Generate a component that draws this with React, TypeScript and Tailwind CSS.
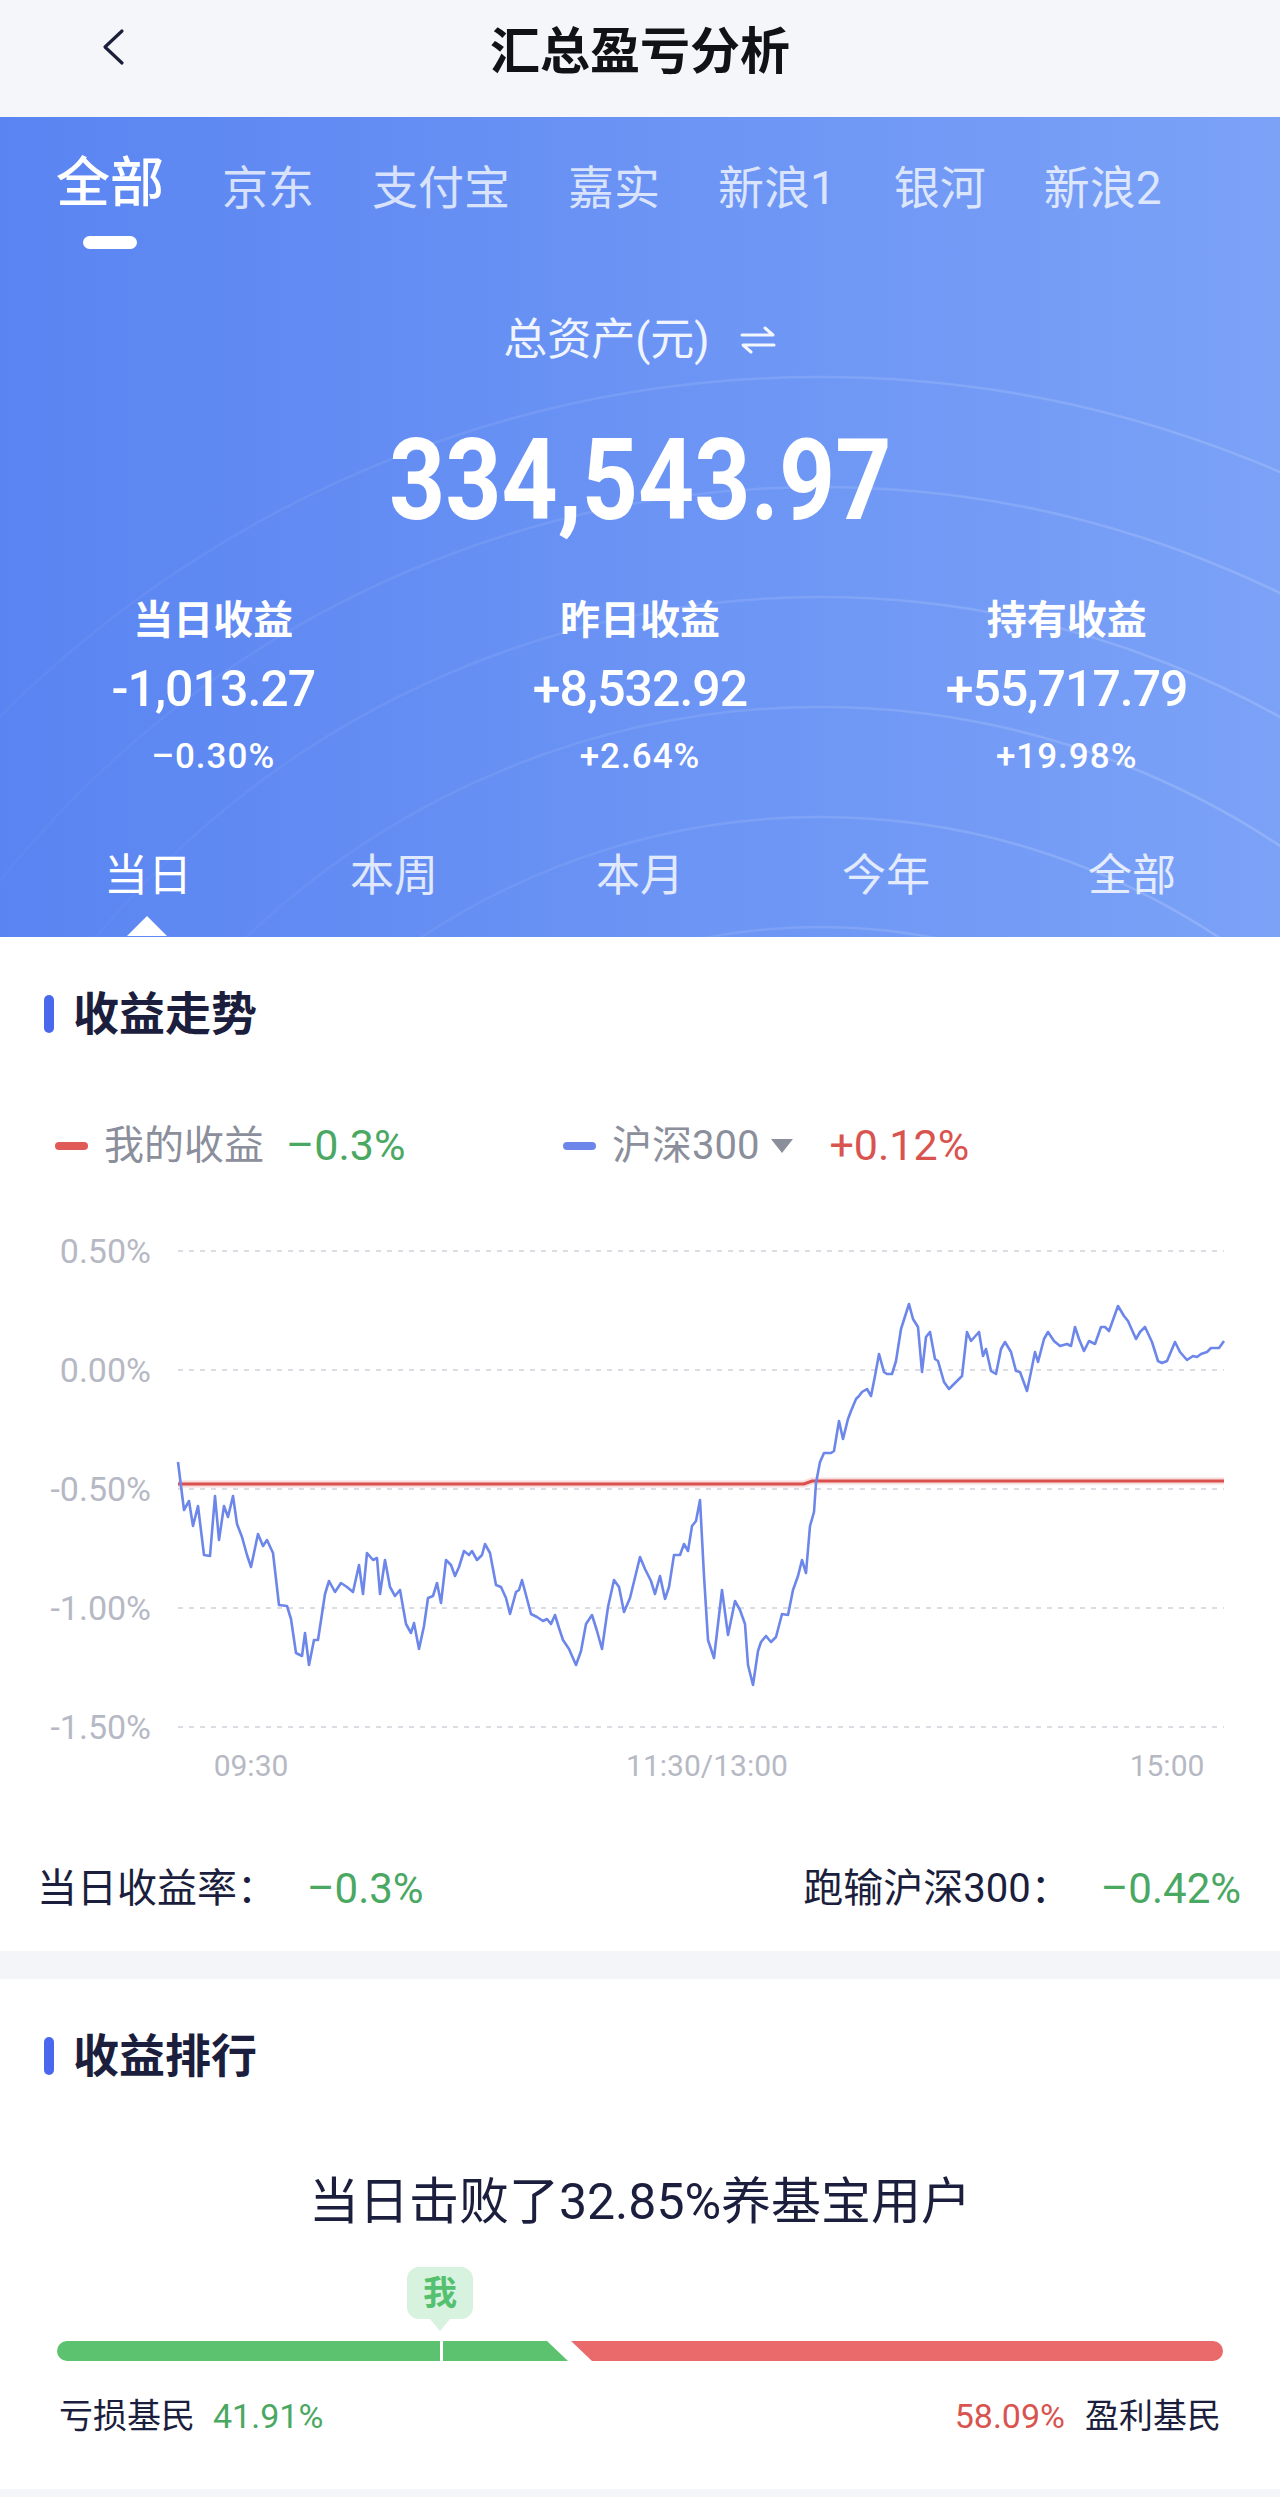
import React from 'react';

// 沪深300 当日走势（页面坐标）
const hs300: [number, number][] = [
  [178, 1463], [184, 1511], [189, 1502], [193, 1527], [198, 1507], [204, 1556], [210, 1557], [215, 1497],
  [219, 1541], [224, 1507], [228, 1518], [233, 1497], [237, 1525], [242, 1538], [247, 1556], [251, 1568],
  [258, 1535], [263, 1547], [267, 1541], [273, 1554], [279, 1606], [287, 1607], [291, 1620], [296, 1654],
  [302, 1657], [305, 1634], [309, 1666], [314, 1641], [318, 1641], [325, 1595], [329, 1582], [335, 1593],
  [341, 1584], [347, 1588], [353, 1593], [359, 1566], [363, 1595], [367, 1554], [373, 1561], [377, 1559],
  [380, 1595], [385, 1561], [390, 1588], [395, 1597], [400, 1591], [406, 1625], [411, 1634], [414, 1624],
  [419, 1650], [424, 1627], [428, 1599], [433, 1597], [437, 1584], [441, 1604], [446, 1561], [451, 1566],
  [455, 1577], [459, 1568], [464, 1552], [469, 1556], [472, 1552], [477, 1561], [482, 1556], [485, 1545],
  [490, 1554], [496, 1586], [501, 1588], [506, 1599], [510, 1615], [516, 1593], [519, 1591], [522, 1581],
  [531, 1615], [537, 1618], [543, 1622], [547, 1620], [551, 1625], [555, 1616], [559, 1629], [563, 1641],
  [569, 1650], [576, 1666], [581, 1652], [586, 1625], [592, 1616], [597, 1632], [602, 1650], [608, 1608],
  [614, 1581], [619, 1588], [624, 1613], [630, 1599], [640, 1558], [645, 1570], [651, 1582], [655, 1595],
  [660, 1577], [665, 1600], [669, 1588], [674, 1556], [680, 1556], [684, 1545], [688, 1552], [692, 1527],
  [696, 1522], [700, 1501], [704, 1577], [708, 1641], [714, 1659], [722, 1591], [728, 1636], [735, 1602],
  [740, 1611], [745, 1625], [748, 1666], [753, 1686], [758, 1652], [761, 1643], [766, 1637], [771, 1643],
  [776, 1638], [782, 1615], [788, 1616], [793, 1591], [798, 1577], [802, 1561], [806, 1574], [810, 1527],
  [814, 1513], [816, 1484], [820, 1463], [824, 1454], [831, 1454], [834, 1452], [839, 1422], [843, 1440],
  [848, 1420], [851, 1412], [856, 1400], [859, 1397], [862, 1393], [867, 1390], [871, 1397], [875, 1377],
  [879, 1355], [884, 1373], [887, 1375], [892, 1375], [896, 1362], [901, 1330], [909, 1305], [913, 1320],
  [918, 1328], [922, 1373], [926, 1338], [930, 1333], [935, 1360], [938, 1362], [944, 1383], [949, 1390],
  [954, 1385], [962, 1377], [967, 1333], [971, 1342], [979, 1333], [983, 1357], [986, 1350], [991, 1372],
  [996, 1375], [1001, 1350], [1005, 1343], [1011, 1353], [1016, 1372], [1020, 1373], [1027, 1392],
  [1031, 1373], [1035, 1353], [1038, 1363], [1044, 1340], [1048, 1333], [1054, 1342], [1060, 1347],
  [1067, 1345], [1071, 1347], [1075, 1328], [1079, 1340], [1084, 1352], [1089, 1342], [1095, 1345],
  [1101, 1328], [1105, 1328], [1109, 1332], [1118, 1307], [1124, 1317], [1128, 1322], [1136, 1340],
  [1140, 1333], [1145, 1328], [1152, 1343], [1158, 1362], [1162, 1364], [1167, 1362], [1175, 1343],
  [1180, 1353], [1187, 1361], [1193, 1357], [1197, 1358], [1201, 1355], [1207, 1353], [1211, 1349],
  [1219, 1349], [1224, 1342],
];

const accounts = ['京东', '支付宝', '嘉实', '新浪1', '银河', '新浪2'];
const periods = ['当日', '本周', '本月', '今年', '全部'];
const stats = [
  { label: '当日收益', value: '-1,013.27', pct: '–0.30%' },
  { label: '昨日收益', value: '+8,532.92', pct: '+2.64%' },
  { label: '持有收益', value: '+55,717.79', pct: '+19.98%' },
];
const grid = [
  { y: 1252, label: '0.50%' },
  { y: 1371, label: '0.00%' },
  { y: 1490, label: '-0.50%' },
  { y: 1609, label: '-1.00%' },
  { y: 1728, label: '-1.50%' },
];

const SectionTitle = ({ text }: { text: string }) => (
  <div className="flex items-center">
    <div className="ml-[44px] h-[38px] w-[10px] rounded-full bg-[#4a68ee]" />
    <div className="ml-[19px] text-[46px] leading-none font-bold text-[#1b1e3c]">{text}</div>
  </div>
);

const App: React.FC = () => {
  const line = hs300.map(([x, y], i) => `${i ? 'L' : 'M'}${x} ${y}`).join(' ');

  return (
    <div className="w-[1280px] bg-[#f4f5f9] font-['Roboto','Noto_Sans_CJK_SC',sans-serif]">
      {/* 顶部导航 */}
      <div className="h-[117px] bg-[#f5f6fa]">
        <div className="relative flex h-[104px] items-center justify-center">
          <svg className="absolute left-[98px] top-[28px]" width="30" height="38" viewBox="0 0 30 38">
            <polyline points="24,3 7,19 24,35" fill="none" stroke="#1c1f3a" strokeWidth="3.2" strokeLinecap="round" strokeLinejoin="round" />
          </svg>
          <div className="text-[50px] leading-none font-bold text-[#111218]">汇总盈亏分析</div>
        </div>
      </div>

      {/* 资产概览 */}
      <div className="relative h-[820px] overflow-hidden bg-linear-to-r from-[#5a84f1] to-[#7ba2f7]">
        <svg className="pointer-events-none absolute inset-0" width="1280" height="820" viewBox="0 0 1280 820">
          <defs>
            <linearGradient id="arcFade" x1="0" x2="1" y1="0" y2="0">
              <stop offset="0" stopColor="#fff" stopOpacity="0" />
              <stop offset="0.45" stopColor="#fff" stopOpacity="0.1" />
              <stop offset="1" stopColor="#fff" stopOpacity="0.22" />
            </linearGradient>
          </defs>
          {[1160, 1050, 940, 830, 720, 610].map((r) => (
            <circle key={r} cx="820" cy="1420" r={r} fill="none" stroke="url(#arcFade)" strokeWidth="2.5" />
          ))}
        </svg>

        <div className="relative">
          <div className="flex items-end gap-[58px] pl-[56px] pt-[40px]">
            <div className="text-[54px] leading-none font-medium text-white">全部</div>
            {accounts.map((a) => (
              <div key={a} className="text-[46px] leading-none text-white/75">{a}</div>
            ))}
          </div>
          <div className="mt-[25px] ml-[83px] h-[13px] w-[54px] rounded-full bg-white" />

          <div className="mt-[69px] flex items-center justify-center gap-[29px] text-white/90">
            <span className="text-[44px] leading-none">总资产(元)</span>
            <svg width="38" height="30" viewBox="0 0 38 30">
              <path d="M3 10 H34 L26 3" fill="none" stroke="white" strokeOpacity="0.92" strokeWidth="3" strokeLinecap="round" strokeLinejoin="round" />
              <path d="M35 20 H4 L12 27" fill="none" stroke="white" strokeOpacity="0.92" strokeWidth="3" strokeLinecap="round" strokeLinejoin="round" />
            </svg>
          </div>

          <div className="mt-[61px] flex justify-center">
            <div className="scale-x-[0.86] text-[114px] leading-none font-bold text-white">334,543.97</div>
          </div>

          <div className="mt-[64px] grid grid-cols-3 text-center text-white">
            {stats.map((s) => (
              <div key={s.label} className="flex flex-col items-center">
                <div className="text-[40px] leading-none font-semibold">{s.label}</div>
                <div className="mt-[23px] text-[50px] leading-none font-medium tracking-[-1px]">{s.value}</div>
                <div className="mt-[25px] text-[35px] leading-none font-medium tracking-[1px]">{s.pct}</div>
              </div>
            ))}
          </div>

          <div className="mt-[80px] grid grid-cols-5 px-[25px] text-center">
            {periods.map((p, i) => (
              <div key={p} className={`text-[44px] leading-none ${i === 0 ? 'text-white' : 'text-white/80'}`}>{p}</div>
            ))}
          </div>
          <div className="mt-[18px] ml-[127px] h-0 w-0 border-x-[20px] border-b-[20px] border-x-transparent border-b-white" />
        </div>
      </div>

      {/* 收益走势 */}
      <div className="bg-white pt-[54px] pb-[41px]">
        <SectionTitle text="收益走势" />

        <div className="mt-[87px] flex h-[43px] items-center text-[40px] leading-none">
          <div className="flex w-[563px] items-center pl-[55px]">
            <div className="h-[8px] w-[33px] rounded-full bg-[#e05a57]" />
            <span className="ml-[16px] text-[#8b8e9b]">我的收益</span>
            <span className="ml-[22px] text-[43px] text-[#4aa863]">–0.3%</span>
          </div>
          <div className="flex items-center">
            <div className="h-[8px] w-[33px] rounded-full bg-[#6d86ea]" />
            <span className="ml-[16px] text-[#8b8e9b]">沪深300</span>
            <svg className="ml-[10px]" width="26" height="18" viewBox="0 0 26 18">
              <path d="M2 2 H24 L13 16 Z" fill="#8b8e9b" strokeLinejoin="round" />
            </svg>
            <span className="ml-[34px] text-[43px] text-[#d9534f]">+0.12%</span>
          </div>
        </div>

        <svg className="mt-[32px] block" width="1280" height="600" viewBox="0 1200 1280 600">
          {grid.map((g) => (
            <g key={g.label}>
              <line x1="178" x2="1224" y1={g.y} y2={g.y} stroke="#dcdde3" strokeWidth="2" strokeDasharray="5 6" />
              <text x="151" y={g.y + 12} textAnchor="end" fontFamily="Roboto, sans-serif" fontSize="34" fill="#b6b9c4">
                {g.label}
              </text>
            </g>
          ))}
          <path d="M178 1485 H804 L812 1482 H1224" fill="none" stroke="#f3c7c6" strokeWidth="7" strokeOpacity="0.6" />
          <path d="M178 1485 H804 L812 1482 H1224" fill="none" stroke="#d9504f" strokeWidth="3" />
          <path d={line} fill="none" stroke="#6d86ea" strokeWidth="2.6" strokeLinejoin="round" />
          <g fontFamily="Roboto, sans-serif" fontSize="30" fill="#b6b9c4" textAnchor="middle">
            <text x="251" y="1777">09:30</text>
            <text x="707" y="1777">11:30/13:00</text>
            <text x="1167" y="1777">15:00</text>
          </g>
        </svg>

        <div className="mt-[69px] flex items-center justify-between pl-[37px] pr-[39px] text-[40px] leading-none">
          <div className="flex items-center">
            <span className="text-[#1b1e3c]">当日收益率：</span>
            <span className="ml-[30px] text-[42px] text-[#4aa863]">–0.3%</span>
          </div>
          <div className="flex items-center">
            <span className="text-[#1b1e3c]">跑输沪深300：</span>
            <span className="ml-[30px] text-[42px] text-[#4aa863]">–0.42%</span>
          </div>
        </div>
      </div>

      {/* 收益排行 */}
      <div className="mt-[28px] bg-white pt-[54px] pb-[56px]">
        <SectionTitle text="收益排行" />

        <div className="mt-[98px] text-center text-[50px] leading-none text-[#1b1e3c]">当日击败了32.85%养基宝用户</div>

        <div className="relative mt-[40px] px-[57px] pt-[74px]">
          <div className="absolute left-[407px] top-0 flex flex-col items-center">
            <div className="flex h-[52px] w-[66px] items-center justify-center rounded-[12px] bg-[#d7f2de] text-[34px] leading-none font-bold text-[#55c070]">
              我
            </div>
            <div className="h-0 w-0 border-x-[10px] border-t-[12px] border-x-transparent border-t-[#d7f2de]" />
          </div>
          <svg className="block" width="1166" height="20" viewBox="0 0 1166 20">
            <path d="M10 0 H490 L511 20 H10 A10 10 0 0 1 10 0 Z" fill="#5cc270" />
            <rect x="383" y="0" width="3" height="20" fill="#fff" />
            <path d="M514 0 H1156 A10 10 0 0 1 1156 20 H535 Z" fill="#ea6a6c" />
          </svg>
        </div>

        <div className="mt-[38px] flex items-center justify-between px-[59px] text-[34px] leading-none">
          <div className="flex items-center">
            <span className="text-[#1b1e3c]">亏损基民</span>
            <span className="ml-[18px] text-[#4aa863]">41.91%</span>
          </div>
          <div className="flex items-center">
            <span className="text-[#d9534f]">58.09%</span>
            <span className="ml-[20px] text-[#1b1e3c]">盈利基民</span>
          </div>
        </div>
      </div>
      <div className="h-[8px]" />
    </div>
  );
};

export default App;
